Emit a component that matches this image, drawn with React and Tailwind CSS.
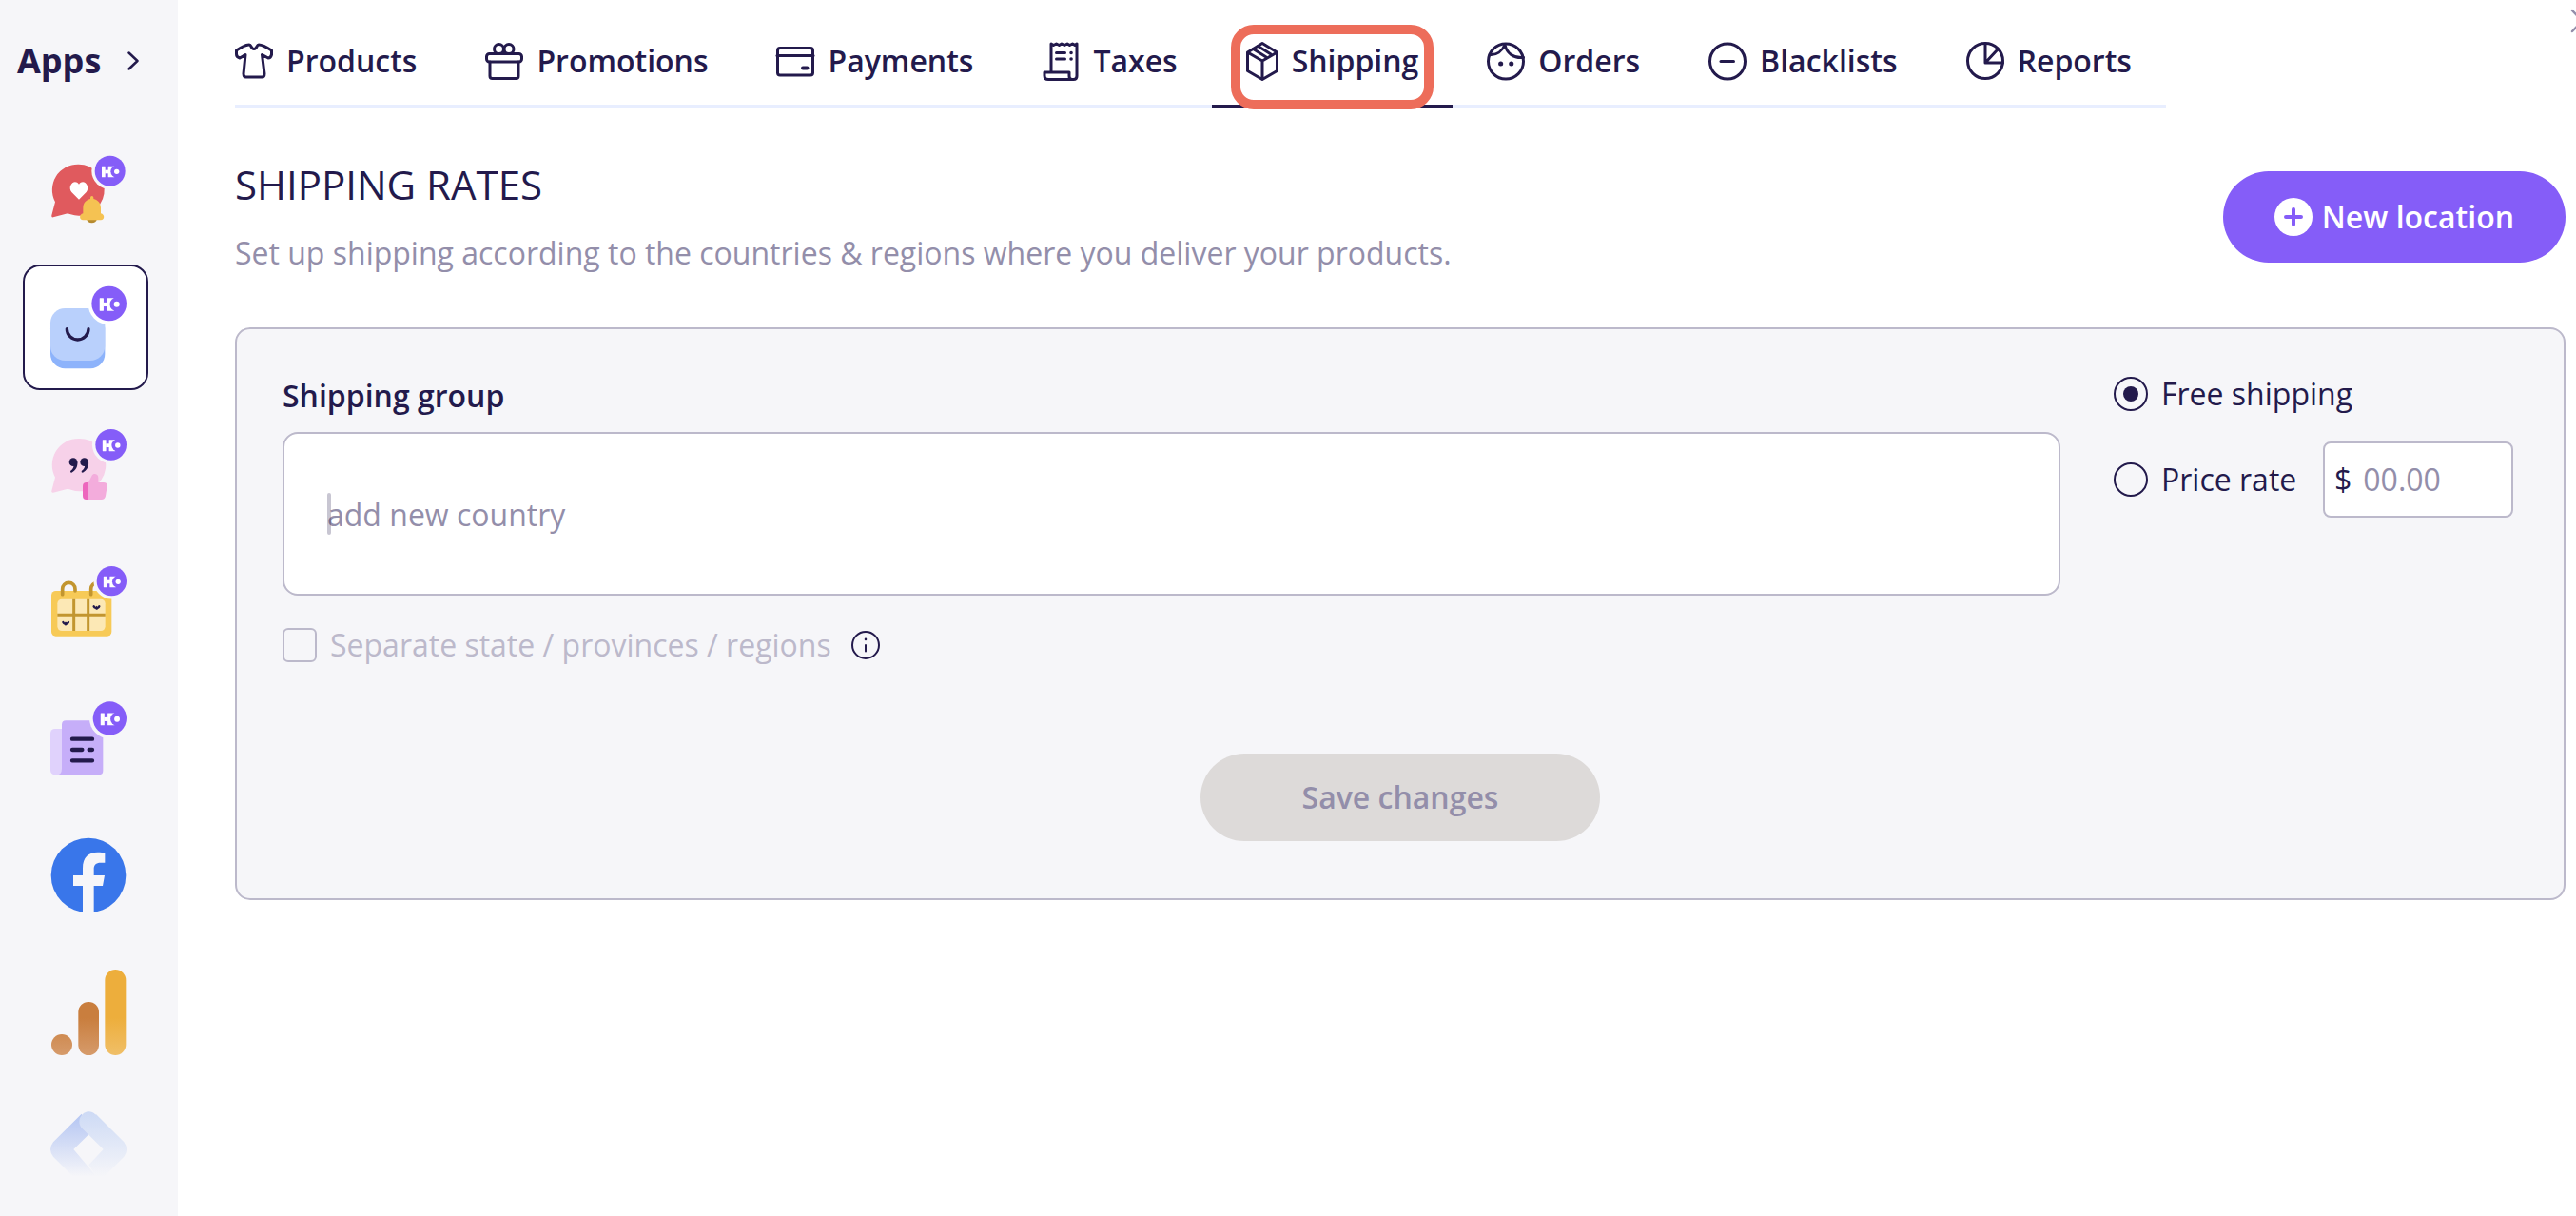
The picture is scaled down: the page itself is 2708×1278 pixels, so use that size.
import React from 'react';

// Round "K" mark pinned to the corner of the in-house apps
const KBadge = ({ x, y, r, halo = '#f6f6f9' }) => (
  <g transform={`translate(${x} ${y}) scale(${r / 48})`}>
    <circle r="58" fill={halo} />
    <circle r="48" fill="#855df8" />
    <rect x="-26" y="-15" width="11" height="35" rx="1" fill="#fff" />
    <rect x="-16" y="-3" width="12" height="11" fill="#fff" />
    <rect x="-6" y="-15" width="20" height="35" rx="1" fill="#fff" />
    <circle cx="21" cy="2" r="19" fill="#855df8" />
    <circle cx="21" cy="2" r="8" fill="#fff" />
  </g>
);

const apps = [
  {
    name: 'Reviews and alerts',
    box: '78 408 384 384',
    art: (
      <>
        <path d="M247 518a81 81 0 1 1-24 158c-4-2-10-3-15-2l-40 11c-4 1-6-2-5-6l11-42a81 81 0 0 1 73-119z" fill="#e05a5e" />
        <path d="M249 629l-23-23c-15-18 8-45 23-25 15-20 38 7 23 25z" fill="#fff" />
        <path d="M273 690h33a17 17 0 0 1-33 0z" fill="#b58a30" />
        <path d="M285 627v-4a5 5 0 0 1 10 0v4c14 3 23 14 23 28v18c13 2 13 21 0 21h-56c-13 0-13-19 0-21v-18c0-14 9-25 23-28z" fill="#f5c252" />
        <KBadge x={347} y={539} r={48} />
      </>
    ),
  },
  {
    name: 'Store',
    active: true,
    box: '78 840 384 384',
    art: (
      <>
        <rect x="159" y="990" width="172" height="172" rx="46" fill="#8db3fb" />
        <rect x="159" y="972" width="172" height="165" rx="46" fill="#b9d0fc" />
        <path d="M211 1037a34 34 0 0 0 68 0" fill="none" stroke="#231a4c" strokeWidth="10" strokeLinecap="round" />
        <KBadge x={344} y={957} r={55} halo="#fff" />
      </>
    ),
  },
  {
    name: 'Testimonials',
    box: '78 12 384 384',
    art: (
      <>
        <path d="M248 123a82 83 0 1 1-24 161c-5-2-10-2-16-1l-40 10c-4 1-6-2-5-6l11-42a83 83 0 0 1 74-122z" fill="#f7d1e9" />
        <g fill="#231a4c">
          <circle cx="231" cy="197" r="13" />
          <circle cx="266" cy="197" r="13" />
          <path d="M244 196c2 16-6 28-18 34-4 0-5-3-3-6 7-5 10-10 9-17zM279 196c2 16-6 28-18 34-4 0-5-3-3-6 7-5 10-10 9-17z" />
        </g>
        <path d="M280 261h-8q-11 0-11 12v30q0 12 11 12h8z" fill="#ed66bd" />
        <path d="M279 261l11-22c4-8 20-6 20 6v16h17q12 0 11 12l-5 31q-2 11-13 11h-41z" fill="#f3acdc" />
        <KBadge x={350} y={142} r={49} />
      </>
    ),
  },
  {
    name: 'Bookings',
    box: '78 444 384 384',
    art: (
      <>
        <rect x="162" y="603" width="190" height="143" rx="14" fill="#f7ca57" />
        <rect x="181" y="629" width="151" height="100" rx="14" fill="#fce8b5" />
        <g fill="none" stroke="#c2952f">
          <path d="M181 679h151M233 629v100M278 629v100" strokeWidth="9" />
          <path d="M197 614v-17a20 20 0 0 1 40 0v6M287 614v-17a20 20 0 0 1 20-20" strokeWidth="11" strokeLinecap="round" />
        </g>
        <g fill="none" stroke="#231a4c" strokeWidth="7" strokeLinecap="round">
          <path d="M296 652q4 7 9 3q5 4 8-3M305 656v3M199 702q4 7 8 3q5 4 9-3M207 706v3" />
        </g>
        <KBadge x={352} y={572} r={47} />
      </>
    ),
  },
  {
    name: 'Forms',
    box: '78 876 384 384',
    art: (
      <>
        <rect x="159" y="1038" width="50" height="145" rx="14" fill="#e0d2fc" />
        <path d="M208 1012h104q13 0 13 13v145q0 13-13 13H178q17 0 17-20v-138q0-13 13-13z" fill="#c6aef9" />
        <path d="M228 1070h63M228 1104h31M281 1104h10M228 1138h63" stroke="#231a4c" strokeWidth="13" strokeLinecap="round" />
        <KBadge x={346} y={1005} r={53} />
      </>
    ),
  },
  {
    name: 'Facebook',
    box: '78 48 384 384',
    art: (
      <>
        <circle cx="279" cy="240" r="118" fill="#3976ea" />
        <path d="M261 360V273h-30v-33h30v-22c0-36 19-51 47-51 10 0 17 1 23 2v31h-13c-16 0-22 8-22 20v20h34l-6 33h-28v87z" fill="#f6f6f9" />
      </>
    ),
  },
  {
    name: 'Google Analytics',
    box: '78 480 384 384',
    art: (
      <>
        <defs>
          <linearGradient id="amber" gradientUnits="userSpaceOnUse" x1="0" y1="690" x2="0" y2="807">
            <stop stopColor="#edae3c" />
            <stop offset="1" stopColor="#f0bf68" />
          </linearGradient>
          <linearGradient id="copper" gradientUnits="userSpaceOnUse" x1="0" y1="690" x2="0" y2="807">
            <stop stopColor="#c97e3e" />
            <stop offset="1" stopColor="#d69b6b" />
          </linearGradient>
        </defs>
        <rect x="331" y="537" width="66" height="270" rx="33" fill="url(#amber)" />
        <rect x="247" y="639" width="65" height="168" rx="32" fill="url(#copper)" />
        <circle cx="195" cy="774" r="33" fill="url(#copper)" />
      </>
    ),
  },
  {
    name: 'Google Tag Manager',
    box: '78 912 384 384',
    art: (
      <>
        <defs>
          <linearGradient id="tagLeft" gradientUnits="userSpaceOnUse" x1="0" y1="1010" x2="0" y2="1190">
            <stop stopColor="#b9c9f3" />
            <stop offset="1" stopColor="#f6f6f9" />
          </linearGradient>
          <linearGradient id="tagRight" gradientUnits="userSpaceOnUse" x1="0" y1="985" x2="0" y2="1190">
            <stop stopColor="#cddaf5" />
            <stop offset="1" stopColor="#f6f6f9" />
          </linearGradient>
        </defs>
        <path d="M257 992L168 1081q-18 23 0 46l63 63h74l-73-86 48-47z" fill="url(#tagLeft)" />
        <path d="M302 992l89 89q17 23 0 46l-63 63h-24l-24-37 46-49-69-68c-22-30 16-70 45-41z" fill="url(#tagRight)" />
      </>
    ),
  },
];

const tabs = [
  {
    name: 'Products',
    icon: (
      <path d="M15 3c2.500 0 1.500 4.500 5 4.500S22.500 3 25 3c4 0 9 3 13.500 6v4.500q-1 3.500-3.500 3.500l-6.500-3.500 2.500 20q0 3.500-2.500 3.500h-17q-2.500 0-2.500-3.500l2-20L5 17q-3.500-1-3.500-4V9C6 6 11 3 15 3z" />
    ),
  },
  {
    name: 'Promotions',
    icon: (
      <>
        <circle cx="14.500" cy="7.500" r="5" />
        <circle cx="25" cy="7.500" r="5" />
        <rect x="1.500" y="12.500" width="37" height="8.500" rx="3" />
        <path d="M5 21v15q0 2.500 2.500 2.500h25q2.500 0 2.500-2.500V21" />
      </>
    ),
  },
  {
    name: 'Payments',
    icon: (
      <>
        <rect x="1.500" y="6.500" width="37" height="28.500" rx="2.500" />
        <path d="M1 14.500h38" />
        <path d="M28 27.500h4.500" strokeWidth="4" />
      </>
    ),
  },
  {
    name: 'Taxes',
    icon: (
      <>
        <path d="M10 31V2l2.500 1.500L15.500 2l3 1.500 2.500-1.500 3 1.500 3-1.500 2.500 1.500 3-1.500 2.500 1.500L37 2v34q0 3.500-3.500 3.500H7q-4 0-4-4V32h26v4q0 3.500 3 3.500" />
        <path d="M15.500 11.500h9M15.500 18h9" />
        <path d="M31 11.500h.1M31 18h.1" strokeWidth="3.500" />
      </>
    ),
  },
  {
    name: 'Shipping',
    active: true,
    icon: (
      <>
        <path d="M17 1.500l15.500 9.500v19.500L17 39.500 1.500 30.500V11zM1.500 11L17 20l15.500-9M17 20v19" />
        <path d="M7.500 7.500L21 16M12.500 4.500L26 13" />
      </>
    ),
  },
  {
    name: 'Orders',
    icon: (
      <>
        <circle cx="20" cy="20.500" r="18.500" />
        <path d="M19 3c-3 7-9 11-15.500 10.500M19 3c2 9 9 14.500 19.500 13.500" />
        <path d="M14.600 23h.1M25.700 23h.1" strokeWidth="5" />
      </>
    ),
  },
  {
    name: 'Blacklists',
    icon: (
      <>
        <circle cx="20" cy="20.500" r="18.500" />
        <path d="M13 20.500h13.500" />
      </>
    ),
  },
  {
    name: 'Reports',
    icon: (
      <>
        <circle cx="20" cy="20" r="18.500" />
        <path d="M20 1.500V22h18.500M20 22L33 8" />
      </>
    ),
  },
];

const Sidebar = () => (
  <aside className="w-[187px] shrink-0 bg-[#f6f6f9]">
    <button className="flex items-center gap-7 pt-[38px] pl-[18px] text-4xl/[52px] font-bold">
      Apps
      <svg className="w-3 h-5" viewBox="0 0 12 20" fill="none" stroke="currentColor" strokeWidth="2.5" strokeLinecap="round" strokeLinejoin="round">
        <path d="M1.500 1.500L10.500 10l-9 8.500" />
      </svg>
    </button>
    <nav className="mt-11 ml-6 flex flex-col gap-3">
      {apps.map((app) => (
        <a
          key={app.name}
          href="#"
          aria-label={app.name}
          className={
            app.active
              ? 'size-[132px] rounded-[18px] border-2 border-[#231a4c] bg-white'
              : 'size-[132px] rounded-[18px] border-2 border-transparent'
          }
        >
          <svg className="size-full" viewBox={app.box}>{app.art}</svg>
        </a>
      ))}
    </nav>
  </aside>
);

const Tabs = () => (
  <nav className="flex w-fit">
    {tabs.map((tab) => (
      <a
        key={tab.name}
        href="#"
        className={
          tab.active
            ? 'relative flex items-center gap-3.5 border-b-4 border-[#231a4c] px-9 pt-10 pb-[22px]'
            : 'flex items-center gap-3.5 border-b-4 border-[#e8eeff] px-9 pt-10 pb-[22px] first:pl-0'
        }
      >
        <svg
          className={tab.active ? 'w-[34px] h-10' : 'size-10'}
          viewBox={tab.active ? '0 0 34 40' : '0 0 40 40'}
          fill="none"
          stroke="currentColor"
          strokeWidth="3"
          strokeLinecap="round"
          strokeLinejoin="round"
          overflow="visible"
        >
          {tab.icon}
        </svg>
        <span className="text-[32px]/[48px] font-semibold">{tab.name}</span>
        {/* Highlight frame around the current tab */}
        {tab.active && (
          <span className="absolute inset-x-5 top-[26px] -bottom-[5px] rounded-3xl border-10 border-[#ed6d5a]" />
        )}
      </a>
    ))}
  </nav>
);

const radioClass =
  "grid size-9 shrink-0 appearance-none place-items-center rounded-full border-2 border-[#231a4c] before:size-4 before:rounded-full checked:before:bg-[#231a4c]";

const App = () => {
  return (
    <div className="relative flex min-h-screen overflow-hidden bg-white font-['Open_Sans',sans-serif] text-[#231a4c]">
      <Sidebar />

      <main className="grow pl-[60px] pr-[11px]">
        <Tabs />

        <header className="mt-[52px] flex items-center justify-between">
          <div>
            <h1 className="text-[42px]/[56px]">SHIPPING RATES</h1>
            <p className="mt-5 text-[32px]/[48px] text-[#938eaa]">
              Set up shipping according to the countries &amp; regions where you deliver your products.
            </p>
          </div>
          <button className="flex h-24 items-center gap-2.5 rounded-full bg-[#855df8] px-[54px] text-[32px]/[48px] font-semibold text-white">
            <svg className="size-10" viewBox="0 0 40 40">
              <circle cx="20" cy="20" r="20" fill="#fff" />
              <path d="M12 20h16M20 12v16" stroke="#855df8" strokeWidth="4" strokeLinecap="round" />
            </svg>
            New location
          </button>
        </header>

        <form className="mt-[54px] rounded-2xl border-2 border-[#bcb9cb] bg-[#f6f6f9] pt-11 pb-[60px] text-[32px]/[48px]">
          <div className="flex gap-14 pl-12 pr-[53px]">
            <div className="grow">
              <label htmlFor="country" className="block leading-[52px] font-semibold">Shipping group</label>
              <div className="relative mt-3">
                <input
                  id="country"
                  type="text"
                  placeholder="add new country"
                  className="h-[172px] w-full rounded-2xl border-2 border-[#bcb9cb] bg-white px-[45px] placeholder:text-[#938eaa]"
                />
                {/* Text caret */}
                <span className="absolute top-16 left-[47px] h-11 w-1 rounded-sm bg-[#231a4c]/25" />
              </div>
              <div className="mt-7 flex items-center">
                <input id="separate" type="checkbox" disabled className="size-9 appearance-none rounded-md border-2 border-[#bcb9cb]" />
                <label htmlFor="separate" className="ml-3.5 text-[#bcb9cb]">Separate state / provinces / regions</label>
                <button type="button" aria-label="More information" className="ml-5">
                  <svg className="size-8" viewBox="0 0 32 32" fill="none" stroke="currentColor" strokeWidth="2" strokeLinecap="round">
                    <circle cx="16" cy="16" r="14" />
                    <path d="M16 16v6.500" />
                    <path d="M16 9.800v.1" strokeWidth="2.500" />
                  </svg>
                </button>
              </div>
            </div>

            <div className="w-[420px] shrink-0">
              <label className="flex items-center gap-3.5">
                <input type="radio" name="rate" defaultChecked className={radioClass} />
                Free shipping
              </label>
              <div className="mt-[26px] flex items-center justify-between">
                <label className="flex items-center gap-3.5">
                  <input type="radio" name="rate" className={radioClass} />
                  Price rate
                </label>
                <label className="flex h-20 w-[200px] items-center gap-3 rounded-lg border-2 border-[#bcb9cb] bg-white px-2.5">
                  $
                  <input type="text" aria-label="Price" placeholder="00.00" className="w-full min-w-0 placeholder:text-[#938eaa]" />
                </label>
              </div>
            </div>
          </div>

          <button type="submit" disabled className="mx-auto mt-[90px] block h-[92px] w-[420px] rounded-full bg-[#dddad9] font-semibold text-[#938eaa]">
            Save changes
          </button>
        </form>
      </main>

      {/* Close button, partly past the right edge */}
      <button aria-label="Close" className="absolute top-2 -right-5 text-[#938eaa]">
        <svg className="size-7" viewBox="0 0 28 28" fill="none" stroke="currentColor" strokeWidth="2.500" strokeLinecap="round">
          <path d="M4 3l21 22M25 3L4 25" />
        </svg>
      </button>
    </div>
  );
};

export default App;
